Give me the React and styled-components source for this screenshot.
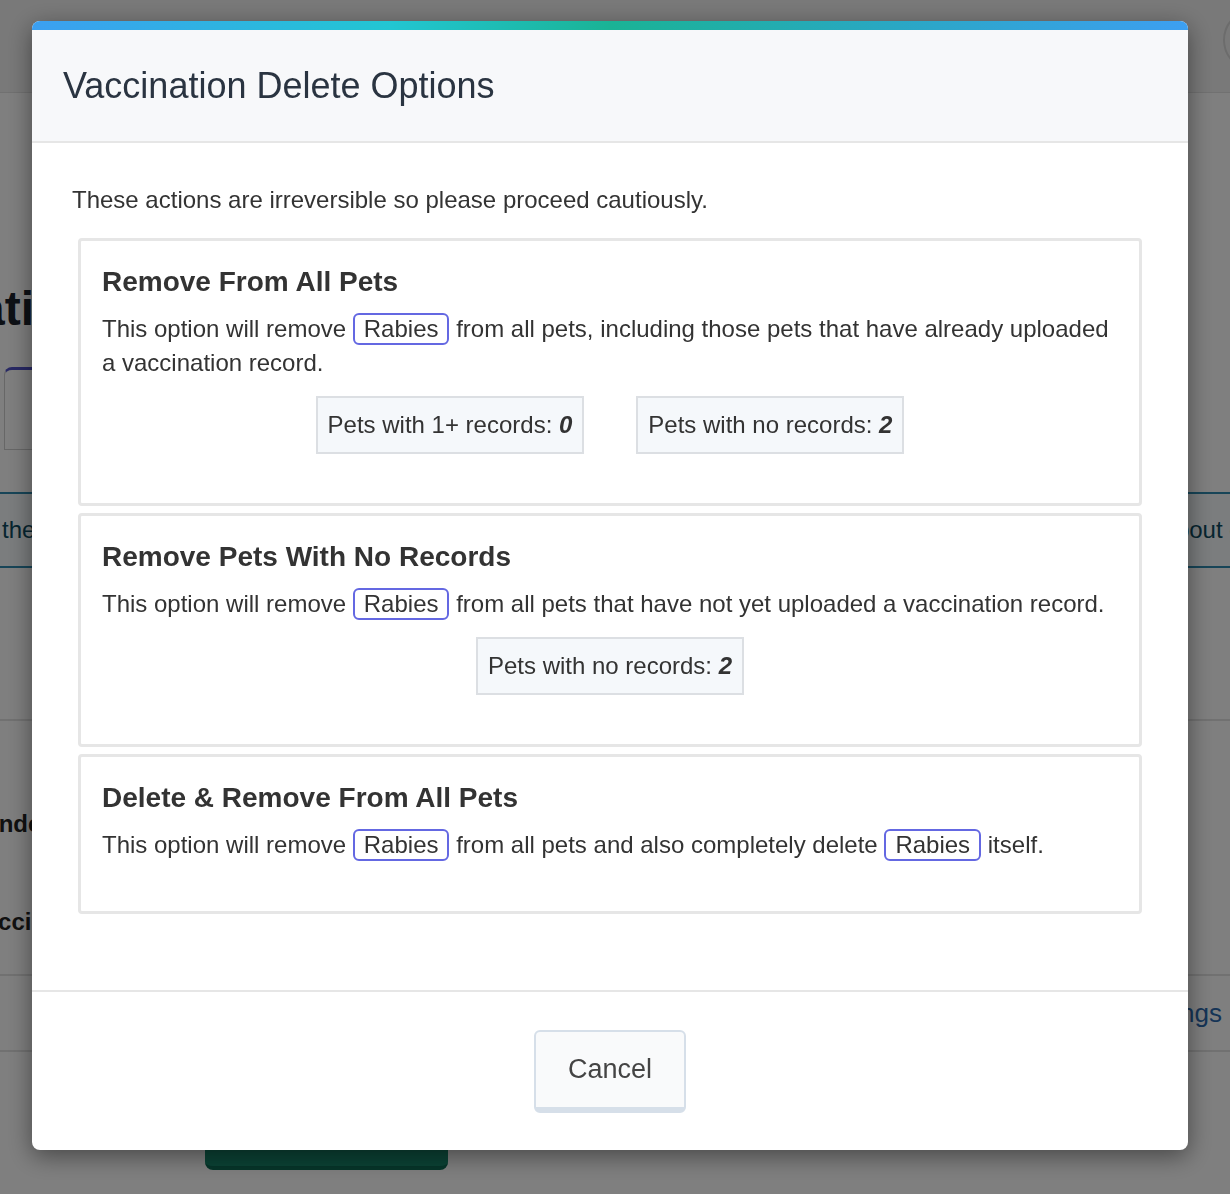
import React from "react"
import styled, { createGlobalStyle } from "styled-components"

const GlobalStyle = createGlobalStyle`
  html, body {
    margin: 0;
    padding: 0;
    background: #ffffff;
    font-family: "Liberation Sans", Arial, Helvetica, sans-serif;
    overflow: hidden;
  }
  * { box-sizing: border-box; }
`

/* ---------- page behind the modal ---------- */
const Page = styled.div`
  width: 1230px;
  height: 1194px;
  overflow: hidden;
  background: #ffffff;
`
const TopBar = styled.header`
  height: 93px;
  background: #f3f3f3;
  border-bottom: 1px solid #e2e2e2;
  display: flex;
  justify-content: flex-end;
  align-items: center;
  overflow: hidden;
`
const Avatar = styled.div`
  width: 62px;
  height: 62px;
  border-radius: 50%;
  border: 2px solid #d8d8d8;
  margin-right: -55px;
  margin-top: -12px;
`
const PageTitle = styled.h1`
  margin: 188px 0 0 -22px;
  font-size: 48px;
  font-weight: 700;
  color: #1b222c;
  line-height: 56px;
  white-space: nowrap;
`
const TabBox = styled.div`
  margin: 30px 0 0 4px;
  width: 320px;
  height: 83px;
  border: 1px solid #cfcfcf;
  border-top: 3px solid #5152c9;
  border-radius: 8px 0 0 0;
`
const Notice = styled.div`
  margin-top: 42px;
  height: 76px;
  border-top: 2px solid #2f8bb0;
  border-bottom: 2px solid #2f8bb0;
  background: #f6fbfc;
  display: flex;
  justify-content: space-between;
  align-items: center;
  font-size: 24px;
  color: #0d4a60;
  white-space: nowrap;
  overflow: hidden;
`
const NoticeText = styled.span`
  margin-left: ${p => p.$offset || 0}px;
  margin-right: ${p => p.$right || 0}px;
`
const Divider = styled.div`
  margin-top: 151px;
  border-top: 2px solid #e3e3e3;
`
const SideLabel = styled.div`
  margin: ${p => p.$top}px 0 0 ${p => p.$left}px;
  font-size: 24px;
  font-weight: 700;
  color: #222;
  white-space: nowrap;
  line-height: 28px;
`
const SettingsRow = styled.div`
  margin-top: 38px;
  height: 78px;
  border-top: 2px solid #e3e3e3;
  border-bottom: 2px solid #e3e3e3;
  display: flex;
  justify-content: flex-end;
  align-items: center;
  font-size: 26px;
  color: #2a69ad;
  overflow: hidden;
  white-space: nowrap;
`
const SettingsLink = styled.span`
  margin-right: 8px;
`
const GreenButton = styled.div`
  margin: 58px 0 0 205px;
  width: 243px;
  height: 60px;
  background: #17876c;
  border-bottom: 4px solid #0d6b54;
  border-radius: 8px;
`

/* ---------- modal ---------- */
const Overlay = styled.div`
  position: fixed;
  inset: 0;
  background: rgba(0, 0, 0, 0.5);
  padding: 21px 0 0 32px;
  display: flex;
  align-items: flex-start;
`
const Modal = styled.div`
  width: 1156px;
  background: #ffffff;
  border-radius: 8px;
  overflow: hidden;
  box-shadow: 0 6px 24px rgba(0, 0, 0, 0.45);
`
const Accent = styled.div`
  height: 9px;
  background: linear-gradient(90deg, #3c9ff1 0%, #22c6d2 31%, #1ab395 50%, #2aa7c4 75%, #3d9ff1 100%);
`
const Header = styled.div`
  height: 113px;
  background: #f7f8fa;
  border-bottom: 2px solid #e6e6e6;
  padding: 0 31px;
  display: flex;
  align-items: center;
`
const Title = styled.h2`
  margin: 0;
  font-size: 36px;
  font-weight: 400;
  color: #2a3441;
`
const Body = styled.div`
  padding: 40px 40px 76px;
  color: #333333;
  font-size: 24px;
  line-height: 34px;
`
const Intro = styled.p`
  margin: 0 0 21px;
`
const OptionList = styled.div`
  display: flex;
  flex-direction: column;
  gap: 7px;
  margin: 0 6px;
`
const Option = styled.section`
  border: 3px solid #e6e6e6;
  border-radius: 4px;
  padding: 24px 21px 49px;
`
const OptionTitle = styled.h3`
  margin: 0 0 13px;
  font-size: 28px;
  line-height: 34px;
  font-weight: 700;
  color: #333333;
`
const OptionText = styled.p`
  margin: 0;
`
const Chip = styled.span`
  display: inline-block;
  border: 2px solid #6468e2;
  border-radius: 6px;
  padding: 0 9px;
  line-height: 28px;
`
const Stats = styled.div`
  display: flex;
  justify-content: center;
  gap: 52px;
  margin-top: 16px;
`
const Stat = styled.div`
  background: #f5f8fb;
  border: 2px solid #dcdfe3;
  padding: 10px 10px;
  white-space: nowrap;
  b {
    font-style: italic;
  }
`
const Footer = styled.div`
  border-top: 2px solid #e6e6e6;
  padding: 38px 0 37px;
  display: flex;
  justify-content: center;
`
const CancelButton = styled.button`
  width: 152px;
  height: 83px;
  background: #f9fafb;
  border: 2px solid #d6dfe9;
  border-bottom-width: 6px;
  border-radius: 6px;
  font-family: inherit;
  font-size: 27px;
  color: #444444;
  padding: 0;
  cursor: pointer;
`

const Rabies = () => <Chip>Rabies</Chip>

export default function App() {
  return (
    <>
      <GlobalStyle />
      <Page>
        <TopBar>
          <Avatar />
        </TopBar>
        <PageTitle>ations</PageTitle>
        <TabBox />
        <Notice>
          <NoticeText $offset={2}>the</NoticeText>
          <NoticeText $right={-34}>about our</NoticeText>
        </Notice>
        <Divider />
        <SideLabel $top={89} $left={-48}>Attended</SideLabel>
        <SideLabel $top={70} $left={-30}>Vaccin</SideLabel>
        <SettingsRow>
          <SettingsLink>Settings</SettingsLink>
        </SettingsRow>
        <GreenButton />
      </Page>
      <Overlay>
        <Modal>
          <Accent />
          <Header>
            <Title>Vaccination Delete Options</Title>
          </Header>
          <Body>
            <Intro>These actions are irreversible so please proceed cautiously.</Intro>
            <OptionList>
              <Option>
                <OptionTitle>Remove From All Pets</OptionTitle>
                <OptionText>
                  This option will remove <Rabies /> from all pets, including those pets that have already uploaded a vaccination record.
                </OptionText>
                <Stats>
                  <Stat>Pets with 1+ records: <b>0</b></Stat>
                  <Stat>Pets with no records: <b>2</b></Stat>
                </Stats>
              </Option>
              <Option>
                <OptionTitle>Remove Pets With No Records</OptionTitle>
                <OptionText>
                  This option will remove <Rabies /> from all pets that have not yet uploaded a vaccination record.
                </OptionText>
                <Stats>
                  <Stat>Pets with no records: <b>2</b></Stat>
                </Stats>
              </Option>
              <Option>
                <OptionTitle>Delete &amp; Remove From All Pets</OptionTitle>
                <OptionText>
                  This option will remove <Rabies /> from all pets and also completely delete <Rabies /> itself.
                </OptionText>
              </Option>
            </OptionList>
          </Body>
          <Footer>
            <CancelButton>Cancel</CancelButton>
          </Footer>
        </Modal>
      </Overlay>
    </>
  )
}
